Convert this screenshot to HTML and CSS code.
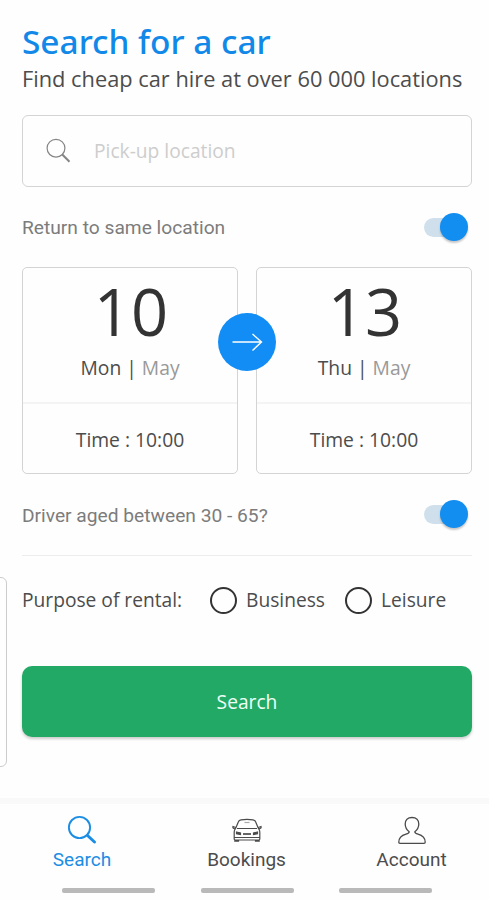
FILE: index.html
```html
<!DOCTYPE html>
<html lang="en">
<head>
<meta charset="utf-8">
<title>Search for a car</title>
<link rel="stylesheet" href="styles.css">
</head>
<body>
<div class="app">
  <div class="side-card"></div>
  <main class="content">
    <h1 class="title">Search for a car</h1>
    <p class="subtitle">Find cheap car hire at over 60 000 locations</p>
    <div class="pickup">
      <svg class="pickup-icon" width="26" height="26" viewBox="0 0 26 26" fill="none" stroke="#858585"><circle cx="10" cy="10.2" r="8.9" stroke-width="1.2"/><path d="M16.3 16.5l7.2 7.2" stroke-width="2"/></svg>
      <span class="placeholder">Pick-up location</span>
    </div>
    <div class="option-row return-row">
      <span class="option-text return-text">Return to same location</span>
      <span class="toggle"><span class="knob"></span></span>
    </div>
    <div class="dates">
      <section class="date-card">
        <div class="date"><div class="day">10</div><div class="weekday">Mon | <span class="month">May</span></div></div>
        <div class="time"><span>Time : 10:00</span></div>
      </section>
      <section class="date-card">
        <div class="date"><div class="day">13</div><div class="weekday">Thu | <span class="month">May</span></div></div>
        <div class="time"><span>Time : 10:00</span></div>
      </section>
      <div class="arrow"><svg width="58" height="58" viewBox="0 0 58 58" fill="none" stroke="#fff" stroke-width="1.4"><path d="M14.5 29H43.5M34.5 21L43.5 29L34.5 37.5"/></svg></div>
    </div>
    <div class="option-row driver-row">
      <span class="option-text driver-text">Driver aged between 30 - 65?</span>
      <span class="toggle"><span class="knob"></span></span>
    </div>
    <div class="purpose">
      <span class="purpose-label">Purpose of rental:</span>
      <span class="radio"></span><span class="radio-label business">Business</span>
      <span class="radio"></span><span class="radio-label">Leisure</span>
    </div>
    <button class="submit">Search</button>
  </main>
  <nav class="tabs">
    <div class="tab active">
      <svg width="30" height="30" viewBox="0 0 30 30" fill="none" stroke="#1b8de4"><circle cx="12.5" cy="12.5" r="10.6" stroke-width="1.9"/><path d="M20.5 20.5l7 6.5" stroke-width="3" stroke-linecap="round"/></svg>
      <span>Search</span>
    </div>
    <div class="tab">
      <svg width="30" height="30" viewBox="0 0 30 30" fill="none" stroke="#4a4a4a" stroke-width="1.2"><path d="M3.7 13.2L6.4 6.7Q7 5.1 9 4.8Q15 3.9 21 4.8Q23 5.1 23.6 6.7L26.3 13.2M3.7 13.2Q2.2 14.5 2.2 17V24Q2.2 25 3.2 25H26.8Q27.8 25 27.8 24V17Q27.8 14.5 26.3 13.2M5 13.5H25M3.7 12.5L1 11.5Q.4 13.5 3 13.8M26.3 12.5L29 11.5Q29.6 13.5 27 13.8M2.5 22.5H27.5M2.8 25V26.2H6.5V25M23.5 25V26.2H27.2V25"/><path d="M4.5 17L8.5 18V19.5L4.5 18.8ZM25.5 17L21.5 18V19.5L25.5 18.8Z" fill="#4a4a4a"/><path d="M11 19H19" stroke-width="1.7"/><path d="M12.5 7.5H17.5" stroke="#aaa"/></svg>
      <span>Bookings</span>
    </div>
    <div class="tab">
      <svg width="30" height="30" viewBox="0 0 30 30" fill="none" stroke="#4b4b4b" stroke-width="1.3" stroke-linejoin="round"><path d="M12.2 16.7C9.5 14.7 8.2 12 8.2 9C8.2 5 10.7 2.5 15 2.5S21.8 5 21.8 9C21.8 12 20.5 14.7 17.8 16.7C17.8 18 18.7 18.6 21 19.2C25.6 20.5 28.2 22.3 28.2 27.2Q28.2 28.3 27 28.3H3Q1.8 28.3 1.8 27.2C1.8 22.3 4.4 20.5 9 19.2C11.3 18.6 12.2 18 12.2 16.7Z"/></svg>
      <span>Account</span>
    </div>
  </nav>
  <div class="handles"><span></span><span></span><span></span></div>
</div>
</body>
</html>
```
FILE: styles.css
```css
* { box-sizing: border-box; }
body { margin: 0; background: #fefefe; font-family: "Open Sans", sans-serif; color: #4c4c4c; }
.app { position: relative; width: 489px; height: 900px; overflow: hidden; display: flex; flex-direction: column; }
.side-card { position: absolute; left: -20px; top: 577px; width: 27px; height: 190px; border: 1px solid #ccc; border-radius: 6px; }
.content { height: 798px; padding: 22px 17px 0 22px; display: flex; flex-direction: column; }
.title { margin: 0; height: 40px; font: 500 33.4px/39px "Noto Sans", sans-serif; color: #1289e8; white-space: nowrap; }
.subtitle { margin: 0; height: 34px; font-size: 21.8px; line-height: 34px; white-space: nowrap; }
.pickup { height: 72px; margin-top: 19px; border: 1.5px solid #d4d4d4; border-radius: 6px; display: flex; align-items: center; padding-left: 23px; gap: 22px; }
.placeholder { color: #cdcdcd; font-size: 19.2px; padding-bottom: 2px; }
.option-row { display: flex; align-items: center; justify-content: space-between; padding-right: 4px; height: 40px; }
.option-text { font: 19.2px/24px Roboto, sans-serif; color: #7c7c7c; padding-top: 1px; }
.return-row { margin-top: 20px; }
.driver-text { padding-top: 3px; }
.toggle { width: 44px; height: 19px; border-radius: 10px; background: linear-gradient(90deg, #cfe0ec 36px, transparent 36px); display: flex; justify-content: flex-end; align-items: center; }
.knob { width: 28px; height: 28px; flex: none; border-radius: 50%; background: #128df0; box-shadow: 0 2px 2px rgba(0,0,0,.22); }
.dates { position: relative; margin-top: 20px; height: 207px; display: grid; grid-template-columns: 1fr 1fr; gap: 18px; }
.date-card { border: 1.5px solid #d4d4d4; border-radius: 5px; text-align: center; }
.date { height: 136px; border-bottom: 2px solid #f4f4f4; }
.day { height: 88px; font-size: 65px; line-height: 87px; color: #333; padding-left: 2px; }
.weekday { font-size: 19.3px; line-height: 24px; white-space: pre; }
.month { color: #999; }
.time { height: 69px; display: flex; align-items: center; justify-content: center; font-size: 19.3px; padding-top: 1px; }
.arrow { position: absolute; left: 196px; top: 46px; width: 58px; height: 58px; border-radius: 50%; background: #128df5; }
.driver-row { margin-top: 20px; }
.purpose { margin-top: 21px; height: 90px; border-top: 1.5px solid #ededed; display: flex; align-items: center; font-size: 19.2px; white-space: nowrap; }
.purpose-label { width: 188px; padding-bottom: 2px; }
.radio { width: 27px; height: 27px; border: 2.5px solid #333; border-radius: 50%; margin-right: 9px; }
.radio-label { padding-bottom: 2px; }
.business { width: 99px; }
.submit { margin-top: 21px; height: 71px; border: 0; border-radius: 10px; background: #23a966; color: #eefff5; font: 19.2px "Open Sans", sans-serif; box-shadow: 0 2px 3px rgba(0,0,0,.2); }
.tabs { height: 80px; border-top: 6px solid #f9f9f9; display: grid; grid-template-columns: 164px 165px 165px; padding-top: 11px; font: 19px/24px Roboto, sans-serif; }
.tab { display: flex; flex-direction: column; align-items: center; gap: 4px; }
.tab span { line-height: 22px; }
.active { color: #1b8de4; }
.handles { display: flex; gap: 45.5px; padding: 9.5px 0 0 62px; }
.handles span { width: 93px; height: 5px; border-radius: 2px; background: #b9b9b9; }
```
